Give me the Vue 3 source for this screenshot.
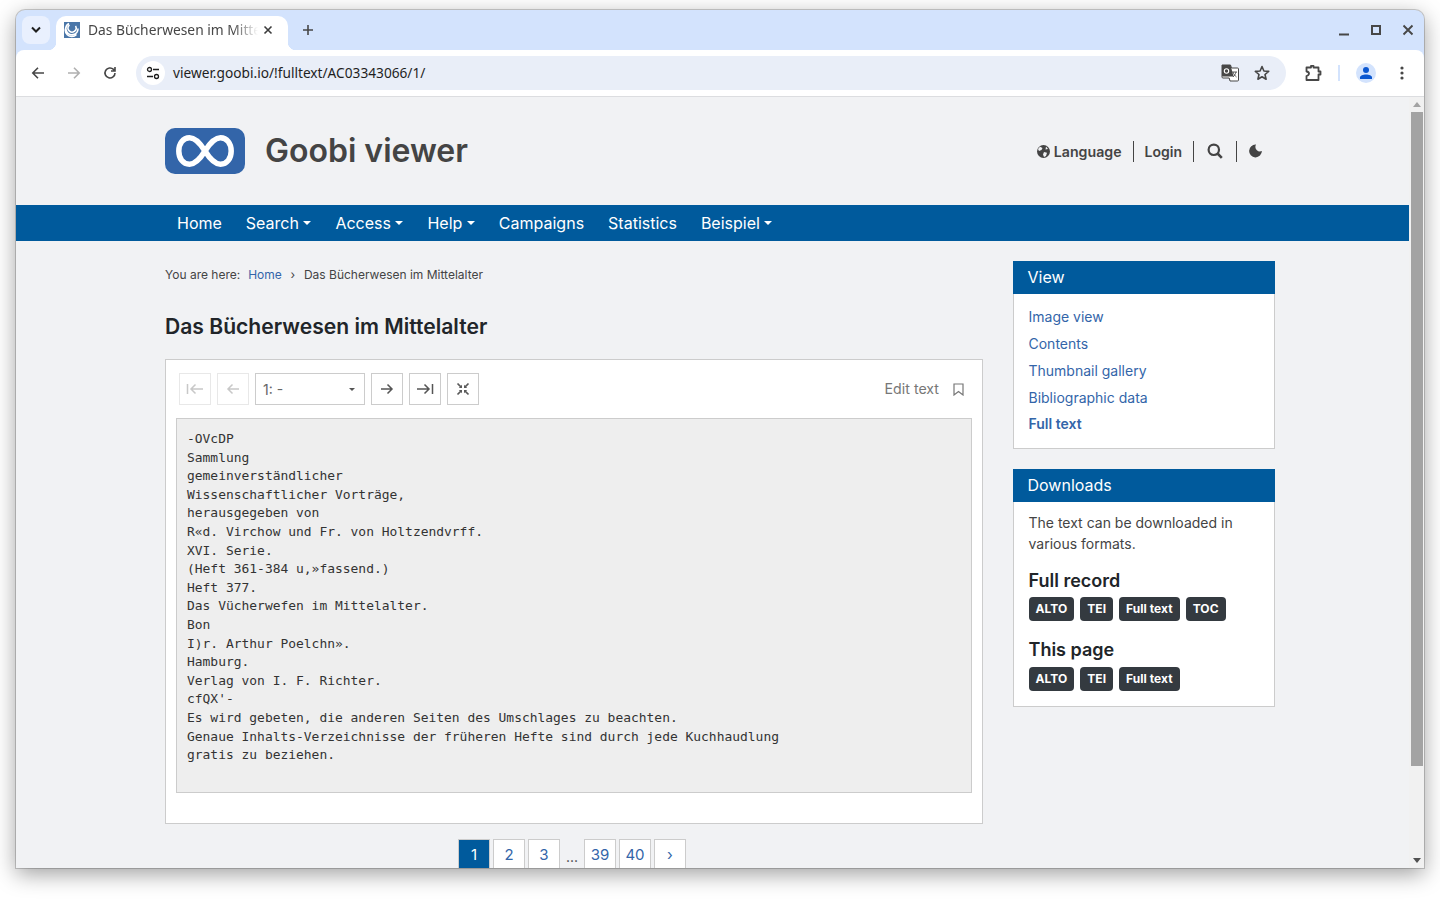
<template>
  <div class="window">
    <div class="tabstrip">
      <button type="button" class="tab-search">
        <svg width="12" height="8" viewBox="0 0 12 8"><path d="M2 1.5 6 5.5 10 1.5" fill="none" stroke="#1f1f1f" stroke-width="2" /></svg>
      </button>
      <div class="tab">
        <svg class="favicon" width="16" height="16" viewBox="0 0 16 16">
          <rect width="16" height="16" fill="#4a76a8" />
          <path d="M5 1.5a6 6 0 1 0 9 5M3 3.500a6.500 6.500 0 0 0 9.500 9M5.500 3a4 4 0 1 0 6 1" fill="none" stroke="#fff" stroke-width="1.500" />
        </svg>
        <span class="tab-title">Das Bücherwesen im Mittelalter</span>
        <svg class="tab-close" width="10" height="10" viewBox="0 0 10 10"><path d="M1.500 1.500l7 7M8.500 1.500l-7 7" stroke="#3c3c3c" stroke-width="1.600" /></svg>
      </div>
      <svg class="new-tab" width="12" height="12" viewBox="0 0 12 12"><path d="M6 1v10M1 6h10" stroke="#474747" stroke-width="1.600" /></svg>
      <div class="win-controls">
        <svg width="12" height="12" viewBox="0 0 12 12"><path d="M1 10.500h10" stroke="#474747" stroke-width="2" /></svg>
        <svg width="12" height="12" viewBox="0 0 12 12"><rect x="2" y="2" width="8" height="8" fill="none" stroke="#474747" stroke-width="2" /></svg>
        <svg width="12" height="12" viewBox="0 0 12 12"><path d="M1.500 1.500l9 9M10.500 1.500l-9 9" stroke="#474747" stroke-width="1.900" /></svg>
      </div>
    </div>

    <div class="toolbar">
      <svg class="tb-icon" width="16" height="16" viewBox="0 0 16 16"><path d="M14 8H3M8 2.800 2.800 8 8 13.200" fill="none" stroke="#474747" stroke-width="1.600" /></svg>
      <svg class="tb-icon" width="16" height="16" viewBox="0 0 16 16"><path d="M2 8h11M8 2.800 13.200 8 8 13.200" fill="none" stroke="#b0b0b0" stroke-width="1.600" /></svg>
      <svg class="tb-icon" width="16" height="16" viewBox="0 0 16 16"><path d="M13 8a5 5 0 1 1-1.500-3.600L13 6M13 2v4H9" fill="none" stroke="#474747" stroke-width="1.600" /></svg>
      <div class="omnibox">
        <span class="site-chip">
          <svg width="14" height="14" viewBox="0 0 14 14">
            <circle cx="3.500" cy="3.500" r="2" fill="none" stroke="#1f1f1f" stroke-width="1.300" />
            <path d="M7 3.500h6M1 10.500h6" stroke="#1f1f1f" stroke-width="1.400" />
            <circle cx="10.500" cy="10.500" r="2" fill="none" stroke="#1f1f1f" stroke-width="1.300" />
          </svg>
        </span>
        <span class="url">viewer.goobi.io/!fulltext/AC03343066/1/</span>
        <svg class="translate" width="18" height="18" viewBox="0 0 18 18">
          <path d="M1 1h8.500l1 3H16.500a1 1 0 0 1 1 1v11a1 1 0 0 1-1 1H9l-.8-3H2a1 1 0 0 1-1-1z" fill="#fff" stroke="#474747" stroke-width="1" />
          <path d="M1 1h8.500l3 11.500H2a1 1 0 0 1-1-1z" fill="#474747" />
          <circle cx="5.500" cy="7" r="2.200" fill="none" stroke="#fff" stroke-width="1.100" />
          <path d="M11 8h5M12 8c.5 2 2 4 3.500 5M15 8c-.5 2-1.500 3.500-3 5" fill="none" stroke="#474747" stroke-width=".9" />
        </svg>
        <svg class="star" width="18" height="18" viewBox="0 0 18 18"><path d="M9 2.500 10.900 7l4.800.4-3.700 3.100 1.100 4.700L9 12.700l-4.100 2.500L6 10.500 2.300 7.400 7.100 7z" fill="none" stroke="#474747" stroke-width="1.600" stroke-linejoin="round" /></svg>
      </div>
      <svg class="extensions" width="18" height="18" viewBox="0 0 18 18"><path d="M2.500 3.500H7V1.800h2.500v1.700h5V7.500h2v3h-2v5.500h-12v-4Q5 11.200 5 9.500T2.500 7.500z" fill="none" stroke="#474747" stroke-width="1.800" stroke-linejoin="round" /></svg>
      <span class="tb-divider"></span>
      <span class="avatar">
        <svg width="14" height="14" viewBox="0 0 14 14"><circle cx="7" cy="4" r="3" fill="#0b57d0" /><path d="M1 13v-1.500C1 9.500 4 8.500 7 8.500s6 1 6 3V13z" fill="#0b57d0" /></svg>
      </span>
      <svg class="menu-dots" width="4" height="14" viewBox="0 0 4 14"><circle cx="2" cy="2" r="1.600" fill="#474747" /><circle cx="2" cy="7" r="1.600" fill="#474747" /><circle cx="2" cy="12" r="1.600" fill="#474747" /></svg>
    </div>

    <div class="viewport">
      <div class="page">
        <header class="site-header">
          <div class="brand">
            <svg class="logo" width="80" height="46" viewBox="0 0 80 46">
              <rect width="80" height="46" rx="10" fill="#3365a9" />
              <path d="M40 23C35 15 30 9.800 24.500 9.800 18 9.800 13.800 15.500 13.800 23S18 36.200 24.500 36.200C30 36.200 35 31 40 23 45 15 50 9.800 55.500 9.800 62 9.800 66.200 15.500 66.200 23S62 36.200 55.500 36.200C50 36.200 45 31 40 23z" fill="none" stroke="#fff" stroke-width="5.500" />
            </svg>
            <span class="brand-name">Goobi viewer</span>
          </div>
          <div class="header-links">
            <a class="hl hl-language">
              <svg class="globe" width="13" height="13" viewBox="0 0 13 13">
                <circle cx="6.500" cy="6.500" r="6.500" fill="#444" />
                <path d="M3 1.800 5.500 3 4.500 5 2 6 1 4zM7 7l3 .8L9 11l-2 1-1-2.500zM9 1.500l2 2.500-2.500.5z" fill="#f1f2f4" />
              </svg>
              Language
            </a>
            <a class="hl">Login</a>
            <a class="hl hl-icon">
              <svg width="16" height="16" viewBox="0 0 16 16"><circle cx="6.800" cy="6.800" r="5.200" fill="none" stroke="#444" stroke-width="2.200" /><path d="M10.500 10.500 14.800 14.800" stroke="#444" stroke-width="2.600" /></svg>
            </a>
            <a class="hl hl-icon hl-moon">
              <svg width="13" height="14" viewBox="0 0 13 14"><path d="M7 .6A6.400 6.400 0 1 0 12.900 7 4.600 4.600 0 0 1 7 .6z" fill="#444" /></svg>
            </a>
          </div>
        </header>

        <nav class="main-nav">
          <a v-for="item in navItems" :key="item.label" class="nav-item" :class="{ 'has-caret': item.caret }">{{ item.label }}</a>
        </nav>

        <div class="columns">
          <main class="content">
            <div class="breadcrumb">
              <span>You are here:</span>
              <a>Home</a>
              <span class="crumb-sep">›</span>
              <span>Das Bücherwesen im Mittelalter</span>
            </div>
            <h1>Das Bücherwesen im Mittelalter</h1>

            <section class="viewer-card">
              <div class="viewer-tools">
                <button type="button" class="tool is-disabled">
                  <svg width="18" height="12" viewBox="0 0 18 12"><path d="M1.500 1v10M17 6H5M9.500 1.500 5 6l4.500 4.500" fill="none" stroke="#c8c8c8" stroke-width="1.500" /></svg>
                </button>
                <button type="button" class="tool is-disabled">
                  <svg width="14" height="12" viewBox="0 0 14 12"><path d="M13 6H2M6.500 1.500 2 6l4.500 4.500" fill="none" stroke="#c8c8c8" stroke-width="1.500" /></svg>
                </button>
                <div class="page-select">
                  <span>1: -</span>
                  <i class="select-caret"></i>
                </div>
                <button type="button" class="tool">
                  <svg width="14" height="12" viewBox="0 0 14 12"><path d="M1 6h11M7.500 1.500 12 6l-4.500 4.500" fill="none" stroke="#555" stroke-width="1.500" /></svg>
                </button>
                <button type="button" class="tool">
                  <svg width="18" height="12" viewBox="0 0 18 12"><path d="M1 6h12M8.500 1.500 13 6l-4.500 4.500M16.500 1v10" fill="none" stroke="#555" stroke-width="1.500" /></svg>
                </button>
                <button type="button" class="tool">
                  <svg width="14" height="14" viewBox="0 0 14 14">
                    <path d="M1.500 1.500 5 5M12.500 1.500 9 5M1.500 12.500 5 9M12.500 12.500 9 9" stroke="#5a5a5a" stroke-width="1.700" />
                    <path d="M2.800 6h3.200V2.800zM11.200 6H8V2.800zM2.800 8H6v3.200zM11.200 8H8v3.200z" fill="#5a5a5a" />
                  </svg>
                </button>
                <span class="edit-text">Edit text</span>
                <svg class="bookmark" width="11" height="13" viewBox="0 0 11 13"><path d="M1 1h9v11L5.500 8.500 1 12z" fill="none" stroke="#777" stroke-width="1.200" /></svg>
              </div>
              <pre class="fulltext">{{ fulltext }}</pre>
            </section>

            <div class="pagination">
              <a class="pg is-active">1</a>
              <a class="pg">2</a>
              <a class="pg">3</a>
              <span class="pg-gap">...</span>
              <a class="pg">39</a>
              <a class="pg">40</a>
              <a class="pg">›</a>
            </div>
          </main>

          <aside class="sidebar">
            <section class="widget">
              <h2>View</h2>
              <div class="widget-body view-links">
                <a v-for="link in viewLinks" :key="link">{{ link }}</a>
                <a class="is-current">Full text</a>
              </div>
            </section>
            <section class="widget">
              <h2>Downloads</h2>
              <div class="widget-body">
                <p>The text can be downloaded in various formats.</p>
                <h3>Full record</h3>
                <div class="badges">
                  <span v-for="b in fullRecord" :key="b">{{ b }}</span>
                </div>
                <h3 class="second">This page</h3>
                <div class="badges">
                  <span v-for="b in thisPage" :key="b">{{ b }}</span>
                </div>
              </div>
            </section>
          </aside>
        </div>
      </div>

      <div class="scrollbar">
        <i class="arrow-up"></i>
        <div class="thumb"></div>
        <i class="arrow-down"></i>
      </div>
    </div>
  </div>
</template>

<script setup>
const navItems = [
  { label: 'Home' },
  { label: 'Search', caret: true },
  { label: 'Access', caret: true },
  { label: 'Help', caret: true },
  { label: 'Campaigns' },
  { label: 'Statistics' },
  { label: 'Beispiel', caret: true }
]

const viewLinks = ['Image view', 'Contents', 'Thumbnail gallery', 'Bibliographic data']
const fullRecord = ['ALTO', 'TEI', 'Full text', 'TOC']
const thisPage = ['ALTO', 'TEI', 'Full text']

const fulltext = `-OVcDP
Sammlung
gemeinverständlicher
Wissenschaftlicher Vorträge,
herausgegeben von
R«d. Virchow und Fr. von Holtzendvrff.
XVI. Serie.
(Heft 361-384 u,»fassend.)
Heft 377.
Das Vücherwefen im Mittelalter.
Bon
I)r. Arthur Poelchn».
Hamburg.
Verlag von I. F. Richter.
cfQX'-
Es wird gebeten, die anderen Seiten des Umschlages zu beachten.
Genaue Inhalts-Verzeichnisse der früheren Hefte sind durch jede Kuchhaudlung
gratis zu beziehen.`
</script>

<style>
html {
  overflow: hidden;
}

body {
  margin: 0;
  height: 900px;
  background: #fff;
}
</style>

<style scoped>
.window {
  width: 1408px;
  height: 858px;
  margin: 0 16px;
  position: relative;
  top: 10px;
  border-radius: 9px 9px 0 0;
  overflow: hidden;
  display: flex;
  flex-direction: column;
  background: #d3e3fd;
  box-shadow: 0 0 0 1px rgba(0, 0, 0, 0.18), 0 6px 22px rgba(0, 0, 0, 0.38);
  font-family: "Inter", "Liberation Sans", sans-serif;
}

.tabstrip {
  height: 40px;
  flex: none;
  display: flex;
  align-items: flex-end;
  padding-left: 6px;
  position: relative;
}

.tab-search {
  width: 28px;
  height: 28px;
  margin-bottom: 6px;
  border: 0;
  padding: 0;
  border-radius: 8px;
  background: #e9f0fe;
  display: flex;
  align-items: center;
  justify-content: center;
}

.tab {
  width: 232px;
  height: 34px;
  margin-left: 6px;
  box-sizing: border-box;
  padding: 0 15px 6px 8px;
  background: #fff;
  border-radius: 10px 10px 0 0;
  display: flex;
  align-items: center;
  position: relative;
}

.tab::before,
.tab::after {
  content: "";
  position: absolute;
  bottom: 0;
  width: 8px;
  height: 8px;
  background: radial-gradient(circle at 0 0, transparent 8px, #fff 8.500px);
}

.tab::before {
  left: -8px;
}

.tab::after {
  right: -8px;
  background: radial-gradient(circle at 100% 0, transparent 8px, #fff 8.500px);
}

.favicon {
  flex: none;
}

.tab-title {
  flex: 1;
  margin-left: 8px;
  width: 0;
  font-family: "Noto Sans", sans-serif;
  font-size: 13.800px;
  line-height: 18px;
  color: #474747;
  white-space: nowrap;
  overflow: hidden;
  -webkit-mask-image: linear-gradient(to right, #000 85%, transparent 100%);
  mask-image: linear-gradient(to right, #000 85%, transparent 100%);
}

.tab-close {
  flex: none;
  margin-left: 5px;
}

.new-tab {
  margin: 0 0 14px 14px;
}

.win-controls {
  margin-left: auto;
  display: flex;
  gap: 20px;
  padding: 0 10px 14px 0;
}

.toolbar {
  height: 46px;
  flex: none;
  box-sizing: border-box;
  background: #fff;
  border-radius: 8px 8px 0 0;
  display: flex;
  align-items: center;
  padding: 0 0 0 14px;
  position: relative;
  z-index: 1;
}

.tb-icon {
  margin-right: 20px;
}

.omnibox {
  width: 1150px;
  height: 34px;
  margin-left: -2px;
  border-radius: 17px;
  background: #e9eef8;
  display: flex;
  align-items: center;
}

.site-chip {
  width: 24px;
  height: 24px;
  margin-left: 5px;
  border-radius: 50%;
  background: #fff;
  display: flex;
  align-items: center;
  justify-content: center;
}

.url {
  margin-left: 8px;
  padding-bottom: 1px;
  font-family: "Noto Sans", sans-serif;
  font-size: 13.700px;
  color: #1f1f1f;
}

.translate {
  margin-left: auto;
}

.star {
  margin: 0 15px 0 14px;
}

.extensions {
  margin-left: 18px;
}

.tb-divider {
  width: 2px;
  height: 16px;
  margin-left: 16px;
  background: #d3e3fd;
}

.avatar {
  width: 20px;
  height: 20px;
  margin-left: 16px;
  border-radius: 50%;
  background: #d3e3fd;
  display: flex;
  align-items: center;
  justify-content: center;
}

.menu-dots {
  margin-left: 24px;
}

.viewport {
  flex: 1;
  min-height: 0;
  display: flex;
  border-top: 1px solid #dcdde0;
  background: #f1f2f4;
}

.page {
  width: 1393px;
  flex: none;
  overflow: hidden;
  color: #444;
}

.site-header {
  height: 108px;
  box-sizing: border-box;
  padding: 0 134px 0 149px;
  display: flex;
  align-items: center;
  justify-content: space-between;
}

.brand {
  display: flex;
  align-items: center;
  gap: 20px;
}

.logo {
  display: block;
}

.brand-name {
  font-size: 32px;
  font-weight: 600;
  line-height: 46px;
  color: #444;
}

.header-links {
  display: flex;
  align-items: center;
}

.hl {
  height: 21px;
  display: flex;
  align-items: center;
  gap: 4px;
  padding: 0 11px;
  font-size: 14px;
  font-weight: 600;
  color: #444;
  border-left: 1px solid #444;
}

.hl-language {
  font-size: 14.200px;
  border-left: 0;
}

.hl-icon {
  padding: 0 13px;
}

.hl-moon {
  padding: 0 13px 0 12px;
}

.main-nav {
  height: 36px;
  padding-left: 149px;
  display: flex;
  align-items: center;
  background: #005a9c;
}

.nav-item {
  padding: 0 12px;
  font-size: 16px;
  line-height: 36px;
  color: #fff;
  display: flex;
  align-items: center;
}

.nav-item.has-caret::after {
  content: "";
  margin-left: 4.500px;
  border-top: 4px solid #fff;
  border-left: 4.250px solid transparent;
  border-right: 4.250px solid transparent;
}

.columns {
  display: flex;
  padding: 20px 134px 0 149px;
  gap: 30px;
}

.content {
  width: 818px;
}

.breadcrumb {
  display: flex;
  gap: 8px;
  padding-top: 6px;
  font-size: 12px;
  line-height: 15px;
  color: #444;
}

.breadcrumb a {
  color: #3365a9;
}

.crumb-sep {
  margin: 0 .75px;
}

h1 {
  margin: 30px 0 17px;
  font-size: 21.100px;
  line-height: 30px;
  font-weight: 600;
  color: #212529;
}

.viewer-card {
  box-sizing: border-box;
  height: 465px;
  padding: 13px 10px 0;
  background: #fff;
  border: 1px solid #ccc;
}

.viewer-tools {
  display: flex;
  align-items: center;
  gap: 6px;
  padding-left: 3px;
}

.tool {
  width: 32px;
  height: 32px;
  box-sizing: border-box;
  padding: 0;
  border: 1px solid #ccc;
  background: #fff;
  display: flex;
  align-items: center;
  justify-content: center;
}

.tool.is-disabled {
  border-color: #e8e8e8;
}

.page-select {
  width: 110px;
  height: 32px;
  box-sizing: border-box;
  border: 1px solid #ccc;
  padding: 0 8px 0 7px;
  display: flex;
  align-items: center;
  justify-content: space-between;
  font-size: 14px;
  color: #666;
}

.select-caret {
  border-top: 3px solid #555;
  border-left: 3px solid transparent;
  border-right: 3px solid transparent;
  margin-right: 1px;
}

.edit-text {
  margin-left: auto;
  padding-bottom: 2px;
  font-size: 14.200px;
  color: #777;
}

.bookmark {
  margin: 0 8px 0 8px;
}

.fulltext {
  box-sizing: border-box;
  height: 375px;
  margin: 13px 0 0;
  padding: 11px 10px;
  background: #eee;
  border: 1px solid #ccc;
  font-family: "DejaVu Sans Mono", monospace;
  font-size: 12.950px;
  line-height: 18.600px;
  color: #333;
}

.pagination {
  display: flex;
  justify-content: center;
  gap: 3px;
  margin-top: 15px;
  padding: 0 4px 20px 0;
}

.pg {
  width: 32px;
  height: 32px;
  box-sizing: border-box;
  border: 1px solid #ccc;
  padding-bottom: 2px;
  background: #fff;
  display: flex;
  align-items: center;
  justify-content: center;
  font-size: 15px;
  color: #3365a9;
}

.pg.is-active {
  background: #005a9c;
  color: #fff;
}

.pg-gap {
  width: 18px;
  text-align: center;
  font-size: 14px;
  line-height: 36px;
  color: #444;
}

.sidebar {
  width: 262px;
  display: flex;
  flex-direction: column;
  gap: 20px;
}

.widget {
  background: #fff;
  border: 1px solid #ccc;
  border-top: 0;
}

.widget h2 {
  margin: 0 -1px;
  height: 33px;
  padding-left: 14.500px;
  background: #005a9c;
  color: #fff;
  font-size: 16px;
  font-weight: 400;
  line-height: 33px;
}

.widget-body {
  padding: 10px 15px 15px 14.500px;
}

.view-links {
  padding-top: 8.500px;
  padding-bottom: 11.500px;
  display: flex;
  flex-direction: column;
}

.view-links a {
  font-size: 14px;
  line-height: 27px;
  color: #3365a9;
}

.view-links .is-current {
  margin-top: -1px;
  font-weight: 600;
}

.widget-body p {
  margin: 0;
  font-size: 14px;
  line-height: 21px;
  color: #444;
}

.widget-body h3 {
  margin: 16px 0 5px;
  font-size: 18px;
  font-weight: 600;
  line-height: 22px;
  color: #212529;
}

.widget-body h3.second {
  margin: 18px 0 6px;
}

.badges {
  display: flex;
  gap: 6px;
}

.badges span {
  height: 24px;
  padding: 0 7px;
  border-radius: 4px;
  background: #343a40;
  color: #fff;
  font-size: 12px;
  font-weight: 700;
  line-height: 24px;
  letter-spacing: .05px;
}

.scrollbar {
  flex: 1;
  background: #f1f1f1;
  display: flex;
  flex-direction: column;
  align-items: center;
}

.arrow-up {
  margin-top: 5px;
  border-bottom: 5px solid #a3a3a3;
  border-left: 4px solid transparent;
  border-right: 4px solid transparent;
}

.thumb {
  width: 12px;
  height: 654px;
  margin-top: 5px;
  background: #a3a3a3;
}

.arrow-down {
  margin-top: auto;
  margin-bottom: 5px;
  border-top: 5px solid #505050;
  border-left: 4px solid transparent;
  border-right: 4px solid transparent;
}
</style>
